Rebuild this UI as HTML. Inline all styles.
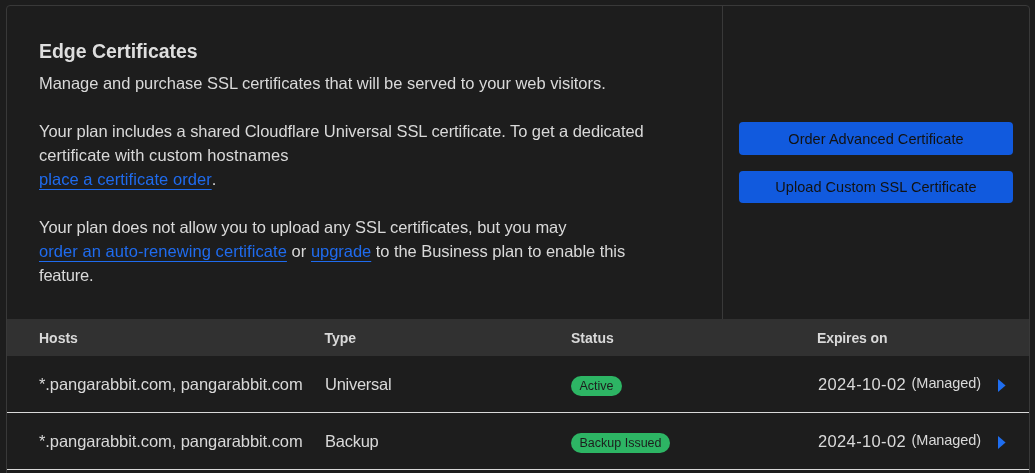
<!DOCTYPE html>
<html lang="en">
<head>
<meta charset="utf-8">
<title>Edge Certificates</title>
<style>
html,body{margin:0;padding:0;}
body{width:1035px;height:473px;overflow:hidden;background:#1d1d1d;color:#d9d9d9;font-family:"Liberation Sans",sans-serif;position:relative;will-change:transform;}
.card{position:absolute;left:6px;top:5px;width:1022px;height:480px;border:1px solid #393939;border-radius:4px;}
.divider{position:absolute;left:722px;top:6px;width:1px;height:313px;background:#393939;}
.t{position:absolute;white-space:nowrap;margin:0;}
h2.t{left:39px;top:40px;font-size:19.5px;line-height:22px;font-weight:700;color:#dedede;letter-spacing:-0.04px;}
p.t{left:39px;font-size:16.5px;line-height:24px;}
a{color:#1f6bee;text-decoration:underline;text-underline-offset:4px;text-decoration-thickness:1px;text-decoration-skip-ink:none;}
.btn{position:absolute;left:739px;width:274px;height:32px;box-sizing:border-box;margin:0;padding:0;border:0;font-family:inherit;cursor:pointer;border-radius:4px;background:#115ade;color:#121212;font-size:14.5px;line-height:32px;text-align:center;white-space:nowrap;}
.thead{position:absolute;left:7px;top:319px;width:1022px;height:37px;background:#313131;}
.th{position:absolute;top:319px;height:37px;line-height:39px;font-size:14px;font-weight:700;white-space:nowrap;}
.row{position:absolute;left:7px;width:1022px;height:56px;border-bottom:1px solid #d9d9d9;}
.td{position:absolute;font-size:16.5px;line-height:24px;white-space:nowrap;}
.badge{position:absolute;height:20px;line-height:20px;border-radius:10px;background:#2db564;color:#1d1d1d;font-size:12.5px;padding:0 8.5px;white-space:nowrap;}
.sm{font-size:14.5px;position:relative;top:-2px;margin-left:1px;}
.tri{position:absolute;width:8px;height:13px;}
</style>
</head>
<body>
<div class="card"></div>
<div class="divider"></div>

<h2 class="t"><span id="title">Edge Certificates</span></h2>
<p class="t" style="top:71px"><span id="p1" style="letter-spacing:-0.04px">Manage and purchase SSL certificates that will be served to your web visitors.</span></p>
<p class="t" style="top:119px"><span id="l2a" style="letter-spacing:-0.067px">Your plan includes a shared Cloudflare Universal SSL certificate. To get a dedicated</span><br><span id="l2b" style="letter-spacing:0.058px">certificate with custom hostnames</span><br><a href="#" id="l2c" style="letter-spacing:0.048px">place a certificate order</a>.</p>
<p class="t" style="top:215px"><span id="l3a" style="letter-spacing:-0.06px">Your plan does not allow you to upload any SSL certificates, but you may</span><br><span id="l3b"><a href="#" id="l3b1" style="letter-spacing:0.062px">order an auto-renewing certificate</a><span id="or" style="letter-spacing:0.05px"> or </span><a href="#" id="l3b2" style="letter-spacing:-0.043px">upgrade</a><span id="l3b3" style="letter-spacing:-0.056px"> to the Business plan to enable this</span></span><br><span id="l3c" style="letter-spacing:-0.2px">feature.</span></p>

<button type="button" class="btn" style="top:122px;height:33px;padding-top:1px"><span id="b1" style="letter-spacing:0.05px">Order Advanced Certificate</span></button>
<button type="button" class="btn" style="top:171px"><span id="b2" style="letter-spacing:0.04px">Upload Custom SSL Certificate</span></button>

<div class="thead"></div>
<div class="th" style="left:39px"><span id="h1">Hosts</span></div>
<div class="th" style="left:324.5px"><span id="h2">Type</span></div>
<div class="th" style="left:571px"><span id="h3">Status</span></div>
<div class="th" style="left:817px"><span id="h4" style="letter-spacing:-0.12px">Expires on</span></div>

<div class="row" style="top:356px"></div>
<div class="row" style="top:413px"></div>

<div class="td" style="left:39px;top:372px"><span id="r1a" style="letter-spacing:-0.071px">*.pangarabbit.com, pangarabbit.com</span></div>
<div class="td" style="left:325px;top:372px"><span id="r1b" style="letter-spacing:-0.267px">Universal</span></div>
<div class="badge" style="left:571px;top:376px"><span id="r1c">Active</span></div>
<div class="td" style="left:818px;top:372px"><span id="r1d" style="letter-spacing:0.36px">2024-10-02</span> <span class="sm" id="r1e" style="letter-spacing:-0.07px">(Managed)</span></div>
<svg class="tri" style="left:998px;top:378.5px" viewBox="0 0 8 13"><polygon points="0,0 7.6,6.5 0,13" fill="#1f6ef0"/></svg>

<div class="td" style="left:39px;top:429px"><span id="r2a" style="letter-spacing:-0.071px">*.pangarabbit.com, pangarabbit.com</span></div>
<div class="td" style="left:325px;top:429px"><span id="r2b" style="letter-spacing:-0.25px">Backup</span></div>
<div class="badge" style="left:571px;top:433px"><span id="r2c">Backup Issued</span></div>
<div class="td" style="left:818px;top:429px"><span id="r2d" style="letter-spacing:0.36px">2024-10-02</span> <span class="sm" id="r2e" style="letter-spacing:-0.07px">(Managed)</span></div>
<svg class="tri" style="left:998px;top:435.5px" viewBox="0 0 8 13"><polygon points="0,0 7.6,6.5 0,13" fill="#1f6ef0"/></svg>
</body>
</html>
